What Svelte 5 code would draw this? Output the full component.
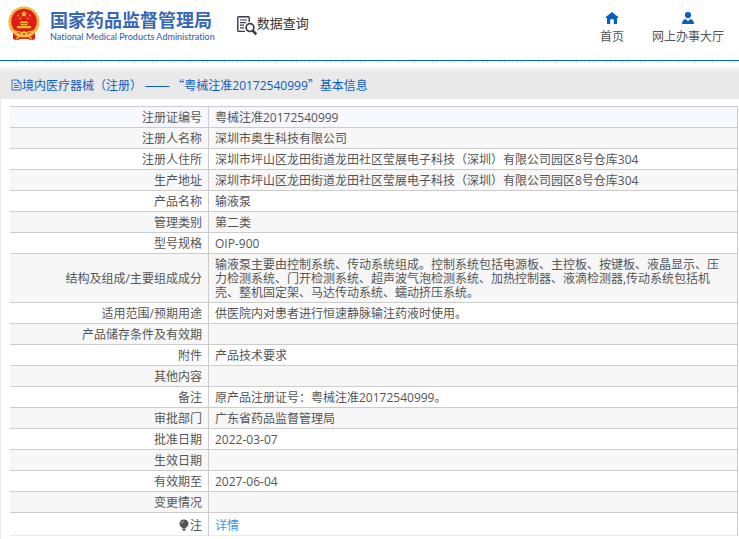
<script>
  const rows = [
    ['注册证编号', '粤械注准20172540999'],
    ['注册人名称', '深圳市奥生科技有限公司'],
    ['注册人住所', '深圳市坪山区龙田街道龙田社区莹展电子科技（深圳）有限公司园区8号仓库304'],
    ['生产地址', '深圳市坪山区龙田街道龙田社区莹展电子科技（深圳）有限公司园区8号仓库304'],
    ['产品名称', '输液泵'],
    ['管理类别', '第二类'],
    ['型号规格', 'OIP-900'],
    ['结构及组成/主要组成成分', '输液泵主要由控制系统、传动系统组成。控制系统包括电源板、主控板、按键板、液晶显示、压力检测系统、门开检测系统、超声波气泡检测系统、加热控制器、液滴检测器,传动系统包括机壳、整机固定架、马达传动系统、蠕动挤压系统。'],
    ['适用范围/预期用途', '供医院内对患者进行恒速静脉输注药液时使用。'],
    ['产品储存条件及有效期', ''],
    ['附件', '产品技术要求'],
    ['其他内容', ''],
    ['备注', '原产品注册证号：粤械注准20172540999。'],
    ['审批部门', '广东省药品监督管理局'],
    ['批准日期', '2022-03-07'],
    ['生效日期', ''],
    ['有效期至', '2027-06-04'],
    ['变更情况', '']
  ];
</script>

<header>
  <div class="brand">
    <svg class="emblem" viewBox="0 0 32 35" aria-hidden="true">
      <path d="M5 25 L5 33 Q9 35 12 33 L20 33 Q24 35 27 33 L27 25 Z" fill="#d8241c" />
      <circle cx="16" cy="16" r="15.6" fill="#edb13a" />
      <circle cx="16" cy="16" r="14" fill="none" stroke="#f8d35c" stroke-width="1" stroke-dasharray="2 1.2" />
      <circle cx="16" cy="15.5" r="12.8" fill="#df1c16" />
      <path d="M16 4.6l.9 2.2 2.4.1-1.9 1.5.7 2.3-2.1-1.3-2.1 1.3.7-2.3-1.9-1.5 2.4-.1z" fill="#f9c93a" />
      <g fill="#f4b83a">
        <circle cx="10.3" cy="9.5" r=".9" /><circle cx="21.7" cy="9.5" r=".9" />
        <circle cx="12.4" cy="12.4" r=".8" /><circle cx="19.6" cy="12.4" r=".8" />
        <path d="M12.5 15.6h7l1 1.6h-9zM12.5 18h7v1.2h-7zM9 20h14v2.2H9z" />
      </g>
      <path d="M4 25.5 Q10 24 16 28 Q22 24 28 25.5 M8 28.5 Q12 32 16 28 Q20 32 24 28.5 M8 33 L12 30 M24 33 L20 30" fill="none" stroke="#f5c33e" stroke-width="1.4" />
      <circle cx="16" cy="28" r="2.7" fill="#f5c33e" />
      <circle cx="16" cy="28" r="1" fill="#d8241c" />
    </svg>
    <div class="names">
      <strong>国家药品监督管理局</strong>
      <span lang="en">National Medical Products Administration</span>
    </div>
  </div>
  <div class="query">
    <svg viewBox="0 0 20 20" aria-hidden="true">
      <g fill="none" stroke="#3a3a4c">
        <path d="M8 15.4H1.6Q.8 15.4.8 14.6V1.6Q.8.8 1.6.8H11.4Q12.2.8 12.2 1.6V6" stroke-width="1.4" />
        <path d="M3 4h7M3 6.6h6M3 9.2h4M3 11.8h4" stroke-width="1.2" />
        <circle cx="13" cy="11.6" r="3.9" stroke-width="1.7" />
        <path d="M15.8 14.6l3.4 3.8" stroke-width="2.6" />
      </g>
    </svg>
    <span>数据查询</span>
  </div>
  <nav>
    <a href="#home">
      <svg viewBox="0 0 14 12" aria-hidden="true"><path d="M7 0l6.6 5.2-.9 1L12 5.8V12H8.8V8Q8.8 7 7 7T5.2 8V12H2V5.8l-.7.4-.9-1z" fill="#0a5fc2" /></svg>
      首页
    </a>
    <a href="#hall">
      <svg viewBox="0 0 14 12" aria-hidden="true"><circle cx="7" cy="3.1" r="3.1" fill="#0a5fc2" /><path d="M1 12Q1 7.8 4.8 7L7 9.2 9.2 7Q13 7.8 13 12z" fill="#0a5fc2" /></svg>
      网上办事大厅
    </a>
  </nav>
</header>
<div class="strip"></div>

<main>
  <h1>
    <svg viewBox="0 0 11 12" aria-hidden="true"><path d="M1 1h6l3 3v7H1zM7 1v3h3M3 4.5h2.5M3 6.5h5M3 8.5h5" fill="none" stroke="#2c74c9" /></svg>
    <span>境内医疗器械（注册） <span class="dash">——</span> <i>“</i>粤械注准20172540999<i>”</i>基本信息</span>
  </h1>
  <div class="sheet">
    <table>
      <tbody>
        {#each rows as [label, value]}
          <tr><th scope="row">{label}</th><td>{value}</td></tr>
        {/each}
        <tr class="note">
          <th scope="row">
            <svg viewBox="0 0 10 12" aria-hidden="true"><path d="M5 .5a4.2 4.2 0 0 1 2.4 7.8L6.8 9.4H3.2L2.6 8.3A4.2 4.2 0 0 1 5 .5zM3.4 10h3.2v1H6v.8H4V11h-.6z" fill="#555" /><path d="M2.6 4.4Q2.8 2.6 4.6 2.3" fill="none" stroke="#ddd" stroke-width=".8" /></svg>注
          </th>
          <td><a href="#detail">详情</a></td>
        </tr>
      </tbody>
    </table>
  </div>
</main>

<style>
  :global(body) {
    background: #fff;
    color: #555;
    font: 12px/14px "Open Sans", "Noto Sans CJK SC", sans-serif;
  }
  header {
    display: flex;
    align-items: flex-start;
    height: 60px;
    border-bottom: 1px solid #0a5fc2;
  }
  .brand {
    display: flex;
    gap: 10px;
    padding: 6px 0 0 8px;
  }
  .emblem {
    width: 32px;
    height: 35px;
  }
  .names {
    display: flex;
    flex-direction: column;
    padding-top: 2px;
    color: #3767b5;
    white-space: nowrap;
  }
  .names strong {
    font: bold 18px/22px "Noto Sans CJK SC", sans-serif;
  }
  .names span {
    font: 500 9px/14px Lato, sans-serif;
    font-variant-ligatures: none;
  }
  .query {
    display: flex;
    padding: 16px 0 0 22px;
    color: #333;
    font-size: 13px;
    line-height: 14px;
    white-space: nowrap;
  }
  .query svg {
    width: 20px;
    height: 20px;
  }
  nav {
    display: flex;
    gap: 28px;
    margin-left: auto;
    padding: 12px 15px 0 0;
  }
  nav a {
    display: flex;
    flex-direction: column;
    align-items: center;
    gap: 4px;
    color: #555;
    line-height: 18px;
    text-decoration: none;
    white-space: nowrap;
  }
  nav svg {
    width: 14px;
    height: 12px;
  }
  .strip {
    height: 10px;
    background:
      repeating-linear-gradient(135deg, #e4e4e4 0 1px, #fff 1px 3px) 0 0 / 100% 2px no-repeat,
      linear-gradient(#fff 40%, #efefef);
  }
  h1 {
    display: flex;
    align-items: center;
    height: 28px;
    margin: 0;
    padding: 0 11px;
    background: #e9e9e9;
    color: #0a5fc2;
    font-size: 12px;
    font-weight: normal;
  }
  h1 svg {
    width: 11px;
    height: 12px;
  }
  h1 i {
    font-family: "Noto Sans CJK SC", sans-serif;
    font-style: normal;
  }
  .dash {
    font-family: "Liberation Sans", sans-serif;
  }
  .sheet {
    padding: 7px 1px 3px 9px;
    border-left: 1px solid #e9e9e9;
  }
  table {
    width: 100%;
    border-collapse: separate;
    border-spacing: 0;
    border-top: 1px solid #ccc;
    border-right: 1px solid #ccc;
  }
  th,
  td {
    height: 14px;
    padding: 4px 6px 2px;
    border-bottom: 1px solid #ccc;
    font-weight: normal;
    vertical-align: middle;
  }
  th {
    width: 186px;
    border-right: 1px solid #ccc;
    text-align: right;
  }
  td {
    padding-right: 12px;
  }
  tr:nth-child(8) td {
    height: 42px;
  }
  tr:nth-child(even) {
    background: #f7f7f7;
  }
  tr:first-child {
    background: #f6f8fd;
  }
  .note,
  .note:nth-child(n) {
    background: #fff;
  }
  .note th,
  .note td {
    padding-top: 6px;
    border-bottom-color: #e9e9e9;
  }
  .note svg {
    width: 10px;
    height: 12px;
    margin-right: 1px;
    vertical-align: -1px;
  }
  td a {
    color: #3494f0;
    text-decoration: none;
  }
</style>
